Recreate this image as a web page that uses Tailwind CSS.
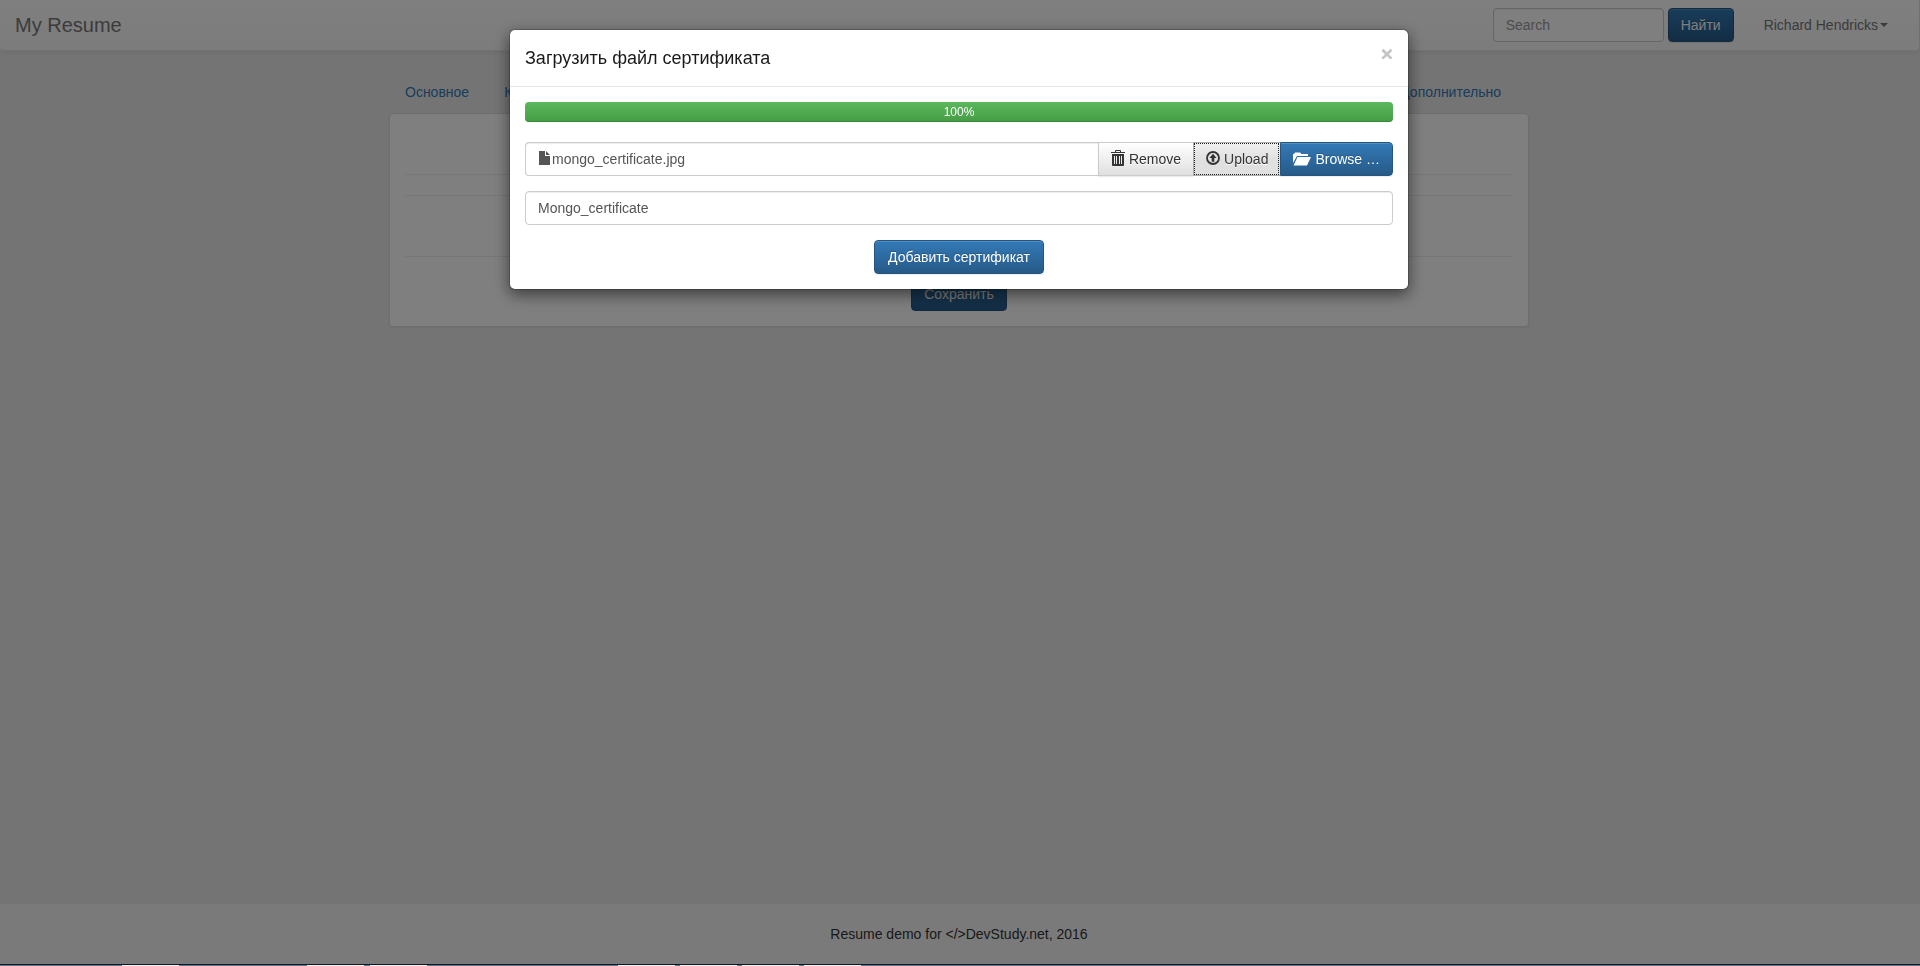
<!DOCTYPE html>
<html lang="ru">
<head>
<meta charset="utf-8">
<title>My Resume</title>
<script src="https://cdn.jsdelivr.net/npm/@tailwindcss/browser@4"></script>
</head>
<body class="font-['Liberation_Sans',Arial,sans-serif] text-sm leading-5 text-[#333] bg-[#e8e8e8] overflow-hidden">
<div class="flex flex-col min-h-screen">
  <nav class="flex items-center justify-between h-[51px] pl-[15px] pr-4 mr-px rounded-b border-b border-[#e7e7e7] bg-linear-to-b from-white to-[#f8f8f8] shadow-[0_1px_5px_rgba(0,0,0,.075)]">
    <a href="#" class="text-xl leading-5 text-[#777]">My Resume</a>
    <div class="flex items-center pr-[15px]">
      <form class="flex gap-1">
        <input type="text" aria-label="Search" placeholder="Search" class="w-[171px] h-[34px] px-3 rounded border border-[#ccc] bg-white shadow-[inset_0_1px_1px_rgba(0,0,0,.075)] placeholder:text-[#999]">
        <button type="button" class="h-[34px] px-3 rounded border border-[#245580] bg-linear-to-b from-[#337ab7] to-[#265a88] text-white [text-shadow:0_-1px_0_rgba(0,0,0,.2)] shadow-[inset_0_1px_0_rgba(255,255,255,.15),0_1px_1px_rgba(0,0,0,.075)]">Найти</button>
      </form>
      <a href="#" class="flex items-center gap-0.5 ml-[30px] text-[#777]">Richard Hendricks<span class="border-x-4 border-t-4 border-x-transparent border-t-[#777]"></span></a>
    </div>
  </nav>

  <main class="w-full max-w-[1142px] pr-0.5 mx-auto mt-5 grow">
    <ul class="flex justify-between h-[42px] px-4 py-[11px]">
      <li class="flex gap-[35px]"><a href="#" class="text-[#337ab7]">Основное</a><a href="#" class="text-[#337ab7]">Контакты</a></li>
      <li class="pr-3"><a href="#" class="text-[#337ab7]">Дополнительно</a></li>
    </ul>
    <section class="flex flex-col px-[15px] pt-[60px] pb-[15px] rounded border border-[#ddd] bg-white shadow-[0_1px_2px_rgba(0,0,0,.05)]">
      <hr class="border-[#eee]">
      <hr class="mt-5 border-[#eee]">
      <hr class="mt-[60px] border-[#eee]">
      <button type="button" class="self-center h-[34px] mt-5 px-3 rounded border border-[#245580] bg-linear-to-b from-[#337ab7] to-[#265a88] text-white [text-shadow:0_-1px_0_rgba(0,0,0,.2)]">Сохранить</button>
    </section>
  </main>

  <footer class="h-[60px] pt-5 pr-0.5 mb-0.5 text-center bg-[#f5f5f5]">Resume demo for &lt;/&gt;DevStudy.net, 2016</footer>
</div>

<div class="fixed inset-0 flex flex-col">
  <div class="grow bg-black/50 pt-[29px] pr-0.5">
    <div role="dialog" aria-labelledby="title" class="w-full max-w-[900px] mx-auto rounded-md border border-black/20 bg-white bg-clip-padding shadow-[0_5px_15px_rgba(0,0,0,.5)]">
      <header class="flex items-start justify-between p-[15px] border-b border-[#e5e5e5]">
        <h4 id="title" class="text-lg leading-[26px] text-[#1a1a1a]">Загрузить файл сертификата</h4>
        <button type="button" aria-label="Close" class="-mt-0.5">
          <span class="text-[21px] leading-[21px] font-bold text-[#c4c4c4] [text-shadow:0_0_1px_#ccc]">×</span>
        </button>
      </header>
      <div class="flex flex-col gap-[15px] p-[15px]">
        <div role="progressbar" aria-valuenow="100" aria-label="Upload progress" class="h-5 mb-[5px] rounded text-center text-xs leading-5 text-white bg-linear-to-b from-[#5cb85c] to-[#449d44] shadow-[inset_0_-1px_0_rgba(0,0,0,.15)]">100%</div>
        <div class="flex h-[34px]">
          <div class="flex grow items-center px-[13px] rounded-l border border-r-0 border-[#ccc] text-[#555] shadow-[inset_0_1px_1px_rgba(0,0,0,.075)]">
            <svg class="w-[11px] h-3.5 mr-0.5 -mt-0.5" viewBox="0 0 11 14" fill="currentColor"><path d="M0 0h6v5h5v9H0zM7 0l4 4H7z"/></svg>mongo_certificate.jpg
          </div>
          <button type="button" class="flex items-center gap-1 px-3 border border-r-0 border-[#ccc] bg-linear-to-b from-white to-[#e0e0e0] text-[#333] [text-shadow:0_1px_0_#fff] shadow-[inset_0_1px_0_rgba(255,255,255,.15),0_1px_1px_rgba(0,0,0,.075)]">
            <svg class="w-3.5 h-4 -mt-0.5" viewBox="0 0 14 16" fill="currentColor"><path fill-rule="evenodd" d="M4 2V1q0-1 1-1h4q1 0 1 1v1h4v1H0V2zM5 1v1h4V1zM1 4h12v11q0 1-1 1H2q-1 0-1-1zM3 6v8h1V6zM5 6v8h1V6zM8 6v8h1V6zM10 6v8h1V6z"/></svg>Remove
          </button>
          <button type="button" class="flex items-center gap-1 px-3 border border-r-0 border-[#adadad] bg-linear-to-b from-[#f0f0f0] via-[#e0e0e0] to-[#e0e0e0] text-[#333] [text-shadow:0_1px_0_#fff] outline-1 outline-dotted outline-[#222] -outline-offset-2">
            <svg class="size-3.5 -mt-0.5" viewBox="0 0 14 14"><circle cx="7" cy="7" r="6" fill="none" stroke="currentColor" stroke-width="1.800"/><path fill="currentColor" d="M7 2.800l3.600 4.200H8.300v3.700H5.700V7H3.400z"/></svg>Upload
          </button>
          <button type="button" class="flex items-center gap-1 px-3 rounded-r border border-[#245580] bg-linear-to-b from-[#337ab7] to-[#265a88] text-white [text-shadow:0_-1px_0_rgba(0,0,0,.2)] shadow-[inset_0_1px_0_rgba(255,255,255,.15),0_1px_1px_rgba(0,0,0,.075)]">
            <svg class="w-[18px] h-3.5" viewBox="0 0 18 14" fill="currentColor"><path d="M0 11V2h1l1-1.500h5L8.500 2H15v2H4zM4.500 5H18l-4 8.500H.5z"/></svg>Browse …
          </button>
        </div>
        <input type="text" aria-label="Certificate name" value="Mongo_certificate" class="w-full h-[34px] px-3 rounded border border-[#ccc] text-[#555] shadow-[inset_0_1px_1px_rgba(0,0,0,.075)]">
        <button type="button" class="self-center h-[34px] px-[13px] rounded border border-[#245580] bg-linear-to-b from-[#337ab7] to-[#265a88] text-white [text-shadow:0_-1px_0_rgba(0,0,0,.2)] shadow-[inset_0_1px_0_rgba(255,255,255,.15),0_1px_1px_rgba(0,0,0,.075)]">Добавить сертификат</button>
      </div>
    </div>
  </div>
  <!-- Edge of the desktop taskbar with its window buttons -->
  <div class="flex h-0.5 border-t border-[#0c1722] bg-[#62768a]">
    <span class="w-[57px] ml-[122px] bg-[#f4f0f2]"></span>
    <span class="w-[57px] ml-32 bg-[#f4f0f2]"></span>
    <span class="w-[57px] ml-1.5 bg-[#f4f0f2]"></span>
    <span class="w-[57px] ml-[191px] bg-[#f4f0f2]"></span>
    <span class="w-[57px] ml-[5px] bg-[#f4f0f2]"></span>
    <span class="w-[57px] ml-[5px] bg-[#f4f0f2]"></span>
    <span class="w-[57px] ml-[5px] bg-[#f4f0f2]"></span>
  </div>
</div>
</body>
</html>
